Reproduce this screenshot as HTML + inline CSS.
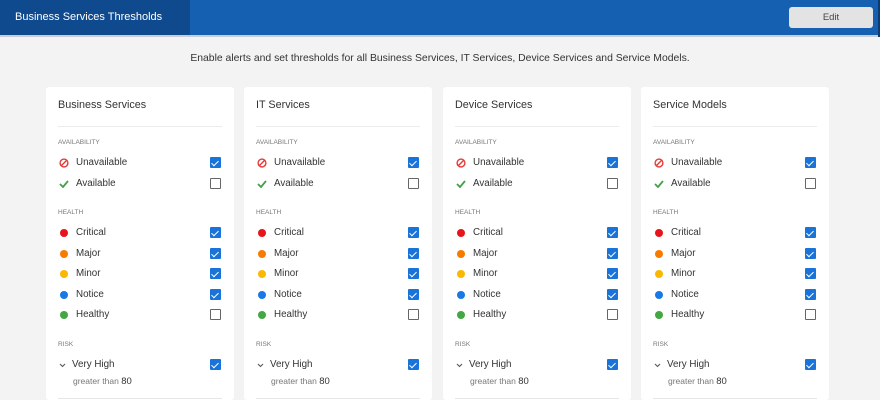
<!DOCTYPE html>
<html><head><style>
*{margin:0;padding:0;box-sizing:border-box}
html,body{width:880px;height:400px;overflow:hidden}
body{background:#f3f3f3;font-family:"Liberation Sans",sans-serif;color:#333;position:relative}
.hdr{position:absolute;left:0;top:0;width:880px;height:37px;background:#1560b0;border-bottom:2px solid #c9ced6}
.hdr .l{position:absolute;left:0;top:0;width:190px;height:35px;background:#0f4a8f}
.hdr .t{position:absolute;left:15px;top:11px;color:#fff;font-size:11px}
.hdr .r{position:absolute;right:0;top:0;width:2px;height:37px;background:#0c3b73}
.edit{position:absolute;left:789px;top:7px;width:84px;height:21px;background:#e3e3e3;border-radius:3px;font-size:9.5px;color:#444;text-align:center;line-height:21px}
.sub{position:absolute;top:53px;left:0;width:880px;text-align:center;font-size:10.4px;color:#333}
.card{position:absolute;top:87px;width:188px;height:313px;background:#fff;border-radius:3px;overflow:hidden}
.card .ti{position:absolute;left:12px;top:12px;font-size:10.8px;color:#333}
.card .sep{position:absolute;left:12px;right:12px;top:39px;height:1px;background:#ececec}
.lab{position:absolute;left:12px;font-size:6.5px;color:#777}
.row{position:absolute;left:12px;right:12px;height:14px;font-size:9.8px;line-height:14px}
.row .tx{position:absolute;left:18px;top:0}
.dot{position:absolute;left:2px;top:3px;width:8px;height:8px;border-radius:50%}
.cb{position:absolute;right:1px;top:1px;width:11px;height:11px;border:1.3px solid #666;border-radius:1px;background:#fff}
.cb.on{border:none;background:#1a73d9}
.cb.on:after{content:"";position:absolute;left:3px;top:1.5px;width:3px;height:6px;border:solid #fff;border-width:0 1.4px 1.4px 0;transform:rotate(45deg)}
.gt{position:absolute;left:27px;font-size:8.5px;color:#777}
.gt b{font-weight:normal;color:#333;font-size:9.5px}
.bot{position:absolute;left:12px;right:12px;top:311px;height:1px;background:#e6e6e6}
</style></head><body>
<div class="hdr"><div class="l"></div><div class="t">Business Services Thresholds</div><div class="r"></div></div>
<div class="edit">Edit</div>
<div class="sub">Enable alerts and set thresholds for all Business Services, IT Services, Device Services and Service Models.</div>

<script>
const names=["Business Services","IT Services","Device Services","Service Models"];
const xs=[46,244,443,641];
let h="";
const ck=(on)=>`<div class="cb${on?' on':''}"></div>`;
names.forEach((n,i)=>{
h+=`<div class="card" style="left:${xs[i]}px">
<div class="ti">${n}</div><div class="sep"></div>
<div class="lab" style="top:52px">AVAILABILITY</div>
<div class="row" style="top:69px"><svg style="position:absolute;left:1px;top:2px" width="10" height="10" viewBox="0 0 10 10"><circle cx="5" cy="5" r="3.9" fill="none" stroke="#e53935" stroke-width="1.4"/><line x1="2.3" y1="7.7" x2="7.7" y2="2.3" stroke="#e53935" stroke-width="1.4"/></svg><span class="tx">Unavailable</span>${ck(1)}</div>
<div class="row" style="top:90px"><svg style="position:absolute;left:1px;top:3px" width="10" height="8" viewBox="0 0 10 8"><path d="M1 4 L4 7 L9 1" fill="none" stroke="#43a047" stroke-width="1.8"/></svg><span class="tx">Available</span>${ck(0)}</div>
<div class="lab" style="top:122px">HEALTH</div>
<div class="row" style="top:139px"><div class="dot" style="background:#e8141c"></div><span class="tx">Critical</span>${ck(1)}</div>
<div class="row" style="top:160px"><div class="dot" style="background:#f57c00"></div><span class="tx">Major</span>${ck(1)}</div>
<div class="row" style="top:180px"><div class="dot" style="background:#fbb800"></div><span class="tx">Minor</span>${ck(1)}</div>
<div class="row" style="top:201px"><div class="dot" style="background:#1a78e6"></div><span class="tx">Notice</span>${ck(1)}</div>
<div class="row" style="top:221px"><div class="dot" style="background:#43a843"></div><span class="tx">Healthy</span>${ck(0)}</div>
<div class="lab" style="top:254px">RISK</div>
<div class="row" style="top:271px"><svg style="position:absolute;left:1px;top:5px" width="7" height="5" viewBox="0 0 7 5"><path d="M1 1 L3.5 3.5 L6 1" fill="none" stroke="#555" stroke-width="1.1"/></svg><span class="tx" style="left:14px">Very High</span>${ck(1)}</div>
<div class="gt" style="top:289px">greater than <b>80</b></div>
<div class="bot"></div>
</div>`;});
document.write(h);
</script>
</body></html>
